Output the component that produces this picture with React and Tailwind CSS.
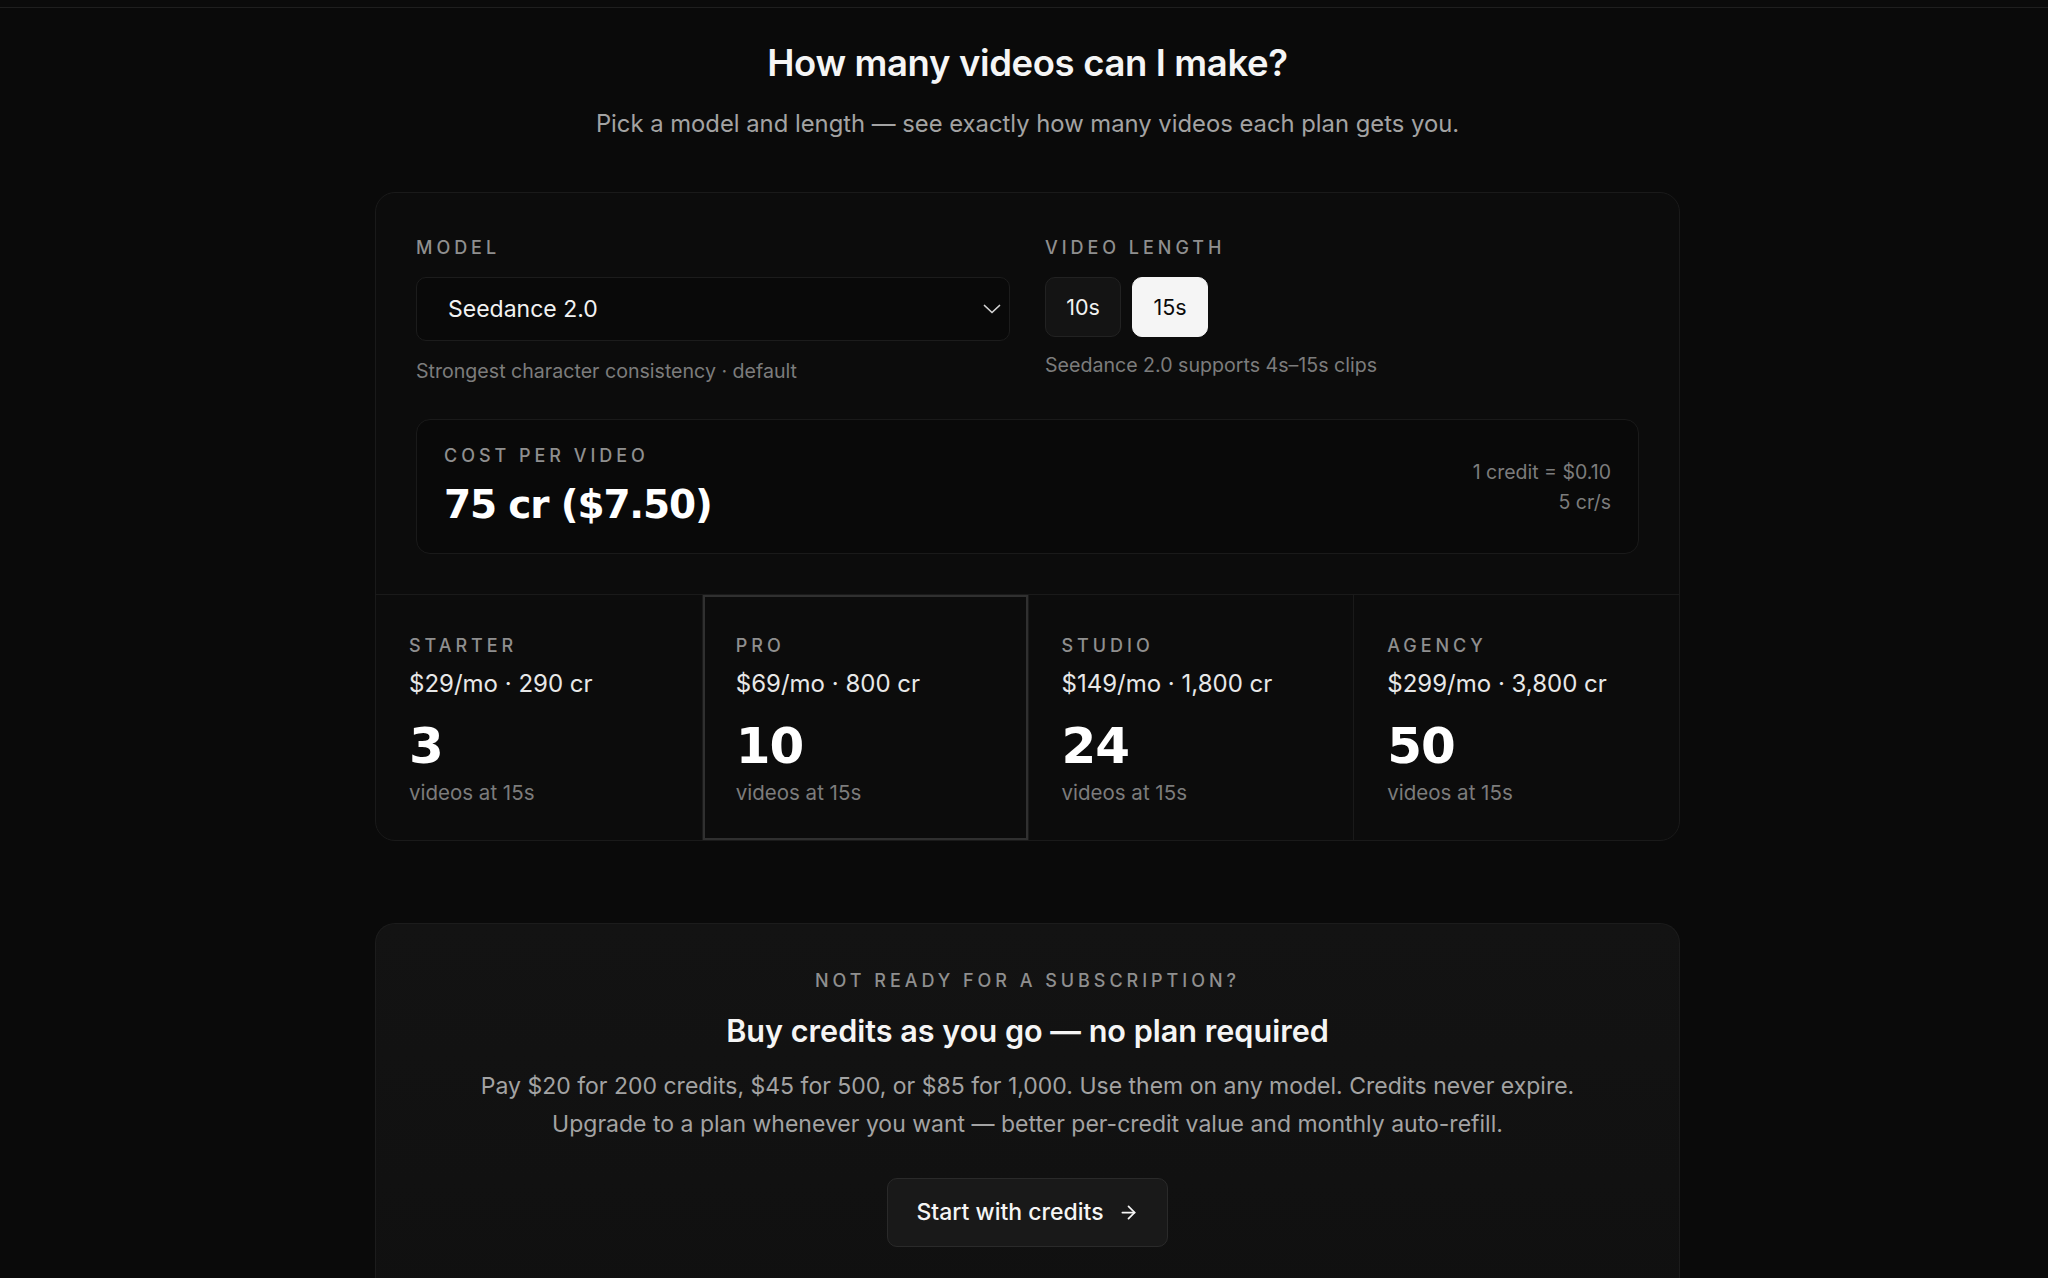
import { useState } from 'react'
import { ArrowRight } from 'lucide-react'

const plans = [
  { name: 'Starter', price: '$29/mo', credits: 290 },
  { name: 'Pro', price: '$69/mo', credits: 800 },
  { name: 'Studio', price: '$149/mo', credits: 1800 },
  { name: 'Agency', price: '$299/mo', credits: 3800 },
]

const CREDITS_PER_SEC = 5

const label = 'text-[18px] leading-[28px] font-medium tracking-[0.22em] text-[#8f8f8f]'

const App = () => {
  const [length, setLength] = useState(15)
  const cost = length * CREDITS_PER_SEC

  return (
    <div className="min-h-screen bg-[#0a0a0a] text-white font-['Inter',sans-serif]">
      <div className="h-[8px] border-b border-[#1f1f1f] bg-[#0b0b0b]" />

      <div className="pl-[7px]">
        <div className="mx-auto w-[1305px] pt-[33px]">
          {/* Header */}
          <h1 className="text-center text-[36.5px] leading-[44px] font-semibold tracking-[-0.01em] text-[#f5f5f5]">
            How many videos can I make?
          </h1>
          <p className="mt-[23px] text-center text-[23.8px] leading-[32px] text-[#a3a3a3]">
            Pick a model and length — see exactly how many videos each plan gets you.
          </p>

          {/* Calculator */}
          <div className="mt-[52px] rounded-[20px] border border-[#1a1a1a] bg-[#0c0c0c] overflow-hidden">
            <div className="p-[40px]">
              <div className="grid grid-cols-2 gap-[35px]">
                <div>
                  <div className={`${label} mt-[1px]`}>MODEL</div>
                  <div className="mt-[15px] flex h-[64px] items-center justify-between rounded-[10px] border border-[#1c1c1c] bg-[#090909] pl-[31px] pr-[8px]">
                    <span className="text-[23px] text-[#f2f2f2]">Seedance 2.0</span>
                    <svg width="18" height="10" viewBox="0 0 18 10" fill="none" className="text-[#d4d4d4]">
                      <path d="M1.5 1.5 L9 8.5 L16.5 1.5" stroke="currentColor" strokeWidth="1.7" strokeLinecap="round" strokeLinejoin="round" />
                    </svg>
                  </div>
                  <div className="mt-[16px] text-[19.6px] leading-[28px] text-[#7c7c7c]">
                    Strongest character consistency · default
                  </div>
                </div>
                <div>
                  <div className={`${label} mt-[1px]`}>VIDEO LENGTH</div>
                  <div className="mt-[15px] flex gap-[11px]">
                    {[10, 15].map((s) => (
                      <button
                        key={s}
                        onClick={() => setLength(s)}
                        className={`h-[60px] w-[76px] rounded-[10px] border text-[21.5px] ${
                          length === s
                            ? 'border-[#f5f5f5] bg-[#f5f5f5] text-[#0a0a0a]'
                            : 'border-[#222] bg-[#141414] text-[#f2f2f2]'
                        }`}
                      >
                        {s}s
                      </button>
                    ))}
                  </div>
                  <div className="mt-[14px] text-[19.6px] leading-[28px] text-[#7c7c7c]">
                    Seedance 2.0 supports 4s–15s clips
                  </div>
                </div>
              </div>

              {/* Cost per video */}
              <div className="mt-[34px] flex h-[135px] items-center justify-between rounded-[14px] border border-[#1a1a1a] bg-[#090909] px-[27px]">
                <div className="pb-[4px]">
                  <div className={label}>COST PER VIDEO</div>
                  <div className="mt-[12px] text-[39px] leading-[46px] font-bold tracking-[-0.03em] text-white font-['DejaVu_Sans',sans-serif]">
                    {cost} cr (${(cost / 10).toFixed(2)})
                  </div>
                </div>
                <div className="text-right text-[19.5px] leading-[30px] text-[#7c7c7c]">
                  <div>1 credit = $0.10</div>
                  <div>{CREDITS_PER_SEC} cr/s</div>
                </div>
              </div>
            </div>

            {/* Plans */}
            <div className="grid grid-cols-4 border-t border-[#1a1a1a]">
              {plans.map((p, i) => (
                <div
                  key={p.name}
                  className={`h-[245px] px-[33px] pt-[37px] ${
                    p.name === 'Pro' ? 'shadow-[inset_0_0_0_2px_#303030]' : ''
                  } ${i > 0 ? 'border-l border-[#1a1a1a]' : ''}`}
                >
                  <div className={`${label} uppercase`}>{p.name}</div>
                  <div className="mt-[8px] text-[24px] leading-[32px] text-[#e8e8e8]">
                    {p.price} · {p.credits.toLocaleString('en-US')} cr
                  </div>
                  <div className="mt-[18px] text-[50px] leading-[56px] font-bold tracking-[-0.02em] text-white font-['DejaVu_Sans',sans-serif]">
                    {Math.floor(p.credits / cost)}
                  </div>
                  <div className="mt-[6px] text-[20.5px] leading-[26px] text-[#7c7c7c]">videos at {length}s</div>
                </div>
              ))}
            </div>
          </div>

          {/* Pay as you go */}
          <div className="mt-[82px] rounded-t-[20px] border border-b-0 border-[#1c1c1c] bg-gradient-to-b from-[#131313] to-[#101010] pt-[43px] pb-[60px] text-center">
            <div className={label}>NOT READY FOR A SUBSCRIPTION?</div>
            <h2 className="mt-[16px] text-[30.6px] leading-[40px] font-semibold text-[#f5f5f5]">
              Buy credits as you go — no plan required
            </h2>
            <p className="mt-[16px] text-[23px] leading-[38px] text-[#a3a3a3]">
              <span className="block">Pay $20 for 200 credits, $45 for 500, or $85 for 1,000. Use them on any model. Credits never expire.</span>
              <span className="block">Upgrade to a plan whenever you want — better per-credit value and monthly auto-refill.</span>
            </p>
            <button className="mt-[35px] inline-flex h-[69px] items-center gap-[14px] rounded-[10px] border border-[#2a2a2a] bg-[#191919] px-[28px] text-[23px] font-medium text-[#f5f5f5]">
              Start with credits
              <ArrowRight className="h-[21px] w-[21px]" strokeWidth={2} />
            </button>
          </div>
        </div>
      </div>
    </div>
  )
}

export default App
